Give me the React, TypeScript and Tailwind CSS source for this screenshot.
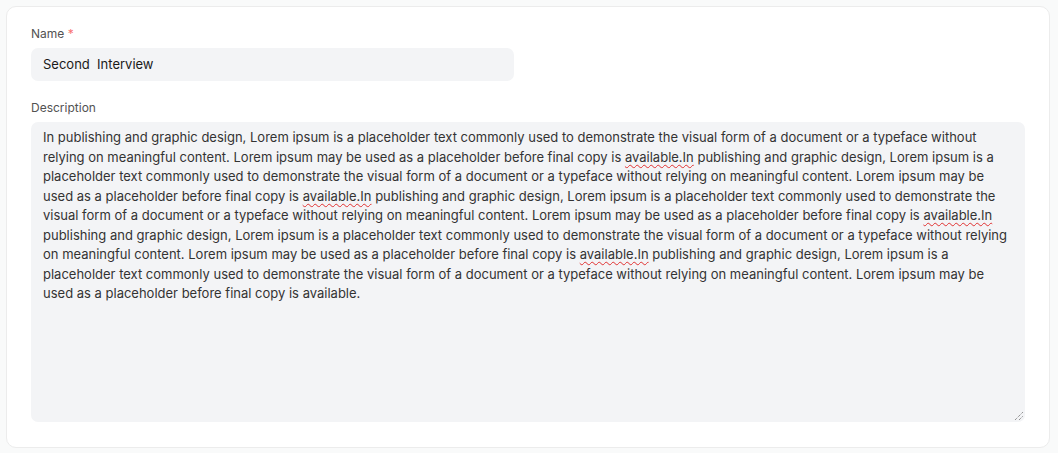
const para =
  'In publishing and graphic design, Lorem ipsum is a placeholder text commonly used to demonstrate the visual form of a document or a typeface without relying on meaningful content. Lorem ipsum may be used as a placeholder before final copy is ';

const rest = ' publishing and graphic design, Lorem ipsum is a placeholder text commonly used to demonstrate the visual form of a document or a typeface without relying on meaningful content. Lorem ipsum may be used as a placeholder before final copy is ';

function Misspelled({ children }: { children: React.ReactNode }) {
  return (
    <span className="underline decoration-wavy decoration-[#e03131] decoration-1 underline-offset-[2px]">
      {children}
    </span>
  );
}

function ResizeHandle() {
  return (
    <svg className="absolute right-[1px] bottom-[1px]" width="10" height="10" viewBox="0 0 10 10">
      <line x1="1" y1="9" x2="9" y2="1" stroke="#6b6b6b" strokeWidth="1" strokeDasharray="1 1" />
      <line x1="5" y1="9" x2="9" y2="5" stroke="#6b6b6b" strokeWidth="1" strokeDasharray="1 1" />
    </svg>
  );
}

export default function App() {
  return (
    <div
      className="min-h-[453px] bg-[#f9fafa] p-[6px] pr-[8px]"
      style={{ fontFamily: 'Inter, "Noto Sans", sans-serif' }}
    >
      <div className="bg-white border border-[#ececec] rounded-[10px] px-6 pt-[19px] pb-[25px]">
        <div className="flex flex-col">
          <label className="text-[12px] leading-4 text-[#525252] mb-[6px]">
            Name <span className="text-[#f87171]">*</span>
          </label>
          <div className="w-[483px] h-[33px] bg-[#f3f4f6] rounded-[7px] px-3 flex items-center text-[13px] text-[#1a1a1a]">
            Second&nbsp; Interview
          </div>
        </div>

        <div className="flex flex-col mt-[19px]">
          <label className="text-[12px] leading-4 text-[#525252] mb-[6px]">Description</label>
          <div className="relative h-[300px] bg-[#f3f4f6] rounded-[7px] pl-3 pr-4 pt-[6px] text-[13px] leading-[19.5px] text-[#333333]">
            {para}
            <Misspelled>available.In</Misspelled>
            {rest}
            <Misspelled>available.In</Misspelled>
            {rest}
            <Misspelled>available.In</Misspelled>
            {rest}
            <Misspelled>available.In</Misspelled>
            {' publishing and graphic design, Lorem ipsum is a placeholder text commonly used to demonstrate the visual form of a document or a typeface without relying on meaningful content. Lorem ipsum may be used as a placeholder before final copy is available.'}
            <ResizeHandle />
          </div>
        </div>
      </div>
    </div>
  );
}
